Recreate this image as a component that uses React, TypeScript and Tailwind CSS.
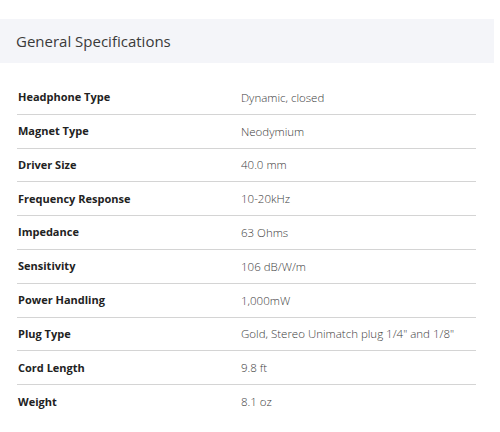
const specs = [
  ['Headphone Type', 'Dynamic, closed'],
  ['Magnet Type', 'Neodymium'],
  ['Driver Size', '40.0 mm'],
  ['Frequency Response', '10-20kHz'],
  ['Impedance', '63 Ohms'],
  ['Sensitivity', '106 dB/W/m'],
  ['Power Handling', '1,000mW'],
  ['Plug Type', 'Gold, Stereo Unimatch plug 1/4" and 1/8"'],
  ['Cord Length', '9.8 ft'],
  ['Weight', '8.1 oz'],
];

export default function App() {
  return (
    <div className="w-[500px] h-[432px] bg-white pt-[19px] font-['Open_Sans',sans-serif] text-[#333]">
      {/* Header */}
      <div className="w-[494px] h-[44px] bg-[#f4f5f9] flex items-center pl-[16px]">
        <h2 className="text-[15px] text-[#3a3a3a]">General Specifications</h2>
      </div>

      {/* Spec rows */}
      <div className="ml-[17px] w-[459px] mt-[18px]">
        {specs.map(([label, value], i) => (
          <div
            key={label}
            className={`flex items-center h-[33.8px] ${i < specs.length - 1 ? 'border-b border-[#d4d4d4]' : ''}`}
          >
            <div className="w-[224px] pl-[1px] text-[11px] font-bold text-[#222]">{label}</div>
            <div className="text-[11.5px] font-light text-[#3c3c3c]">{value}</div>
          </div>
        ))}
      </div>
    </div>
  );
}
